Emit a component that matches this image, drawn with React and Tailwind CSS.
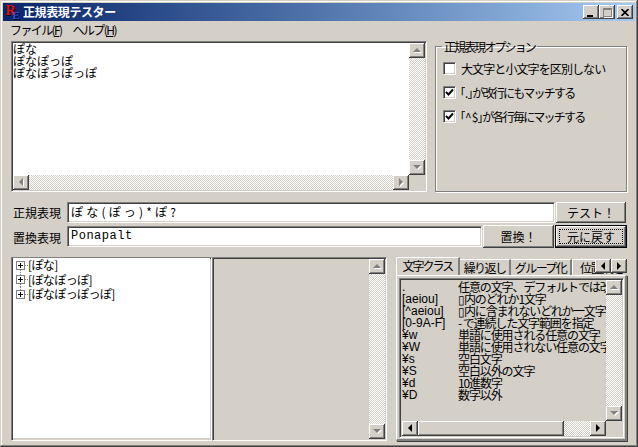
const jp = "font-['Noto_Sans_CJK_JP','Liberation_Sans',sans-serif]";
const sunken = "border border-t-[#808080] border-l-[#808080] border-b-white border-r-white shadow-[inset_1px_1px_0_#404040,inset_-1px_-1px_0_#d4d0c8] p-px";
const raised = "shadow-[inset_-1px_-1px_0_#404040,inset_1px_1px_0_#fff,inset_-2px_-2px_0_#808080,inset_2px_2px_0_#d4d0c8] bg-[#d4d0c8]";
const dither = "bg-[repeating-conic-gradient(#ffffff_0_25%,#d4d0c8_0_50%)] bg-size-[2px_2px]";

function Arrow({ dir, off }) {
  const pts = {
    up: "0,4 8,4 4,0", down: "0,0 8,0 4,4", left: "4,0 4,8 0,4", right: "0,0 0,8 4,4",
  }[dir];
  const vert = dir === "up" || dir === "down";
  const w = vert ? 8 : 4;
  const h = vert ? 4 : 8;
  return (
    <svg width={w + 1} height={h + 1} viewBox={`0 0 ${w + 1} ${h + 1}`} className="block">
      {off && <polygon points={pts} fill="#ffffff" transform="translate(1 1)" />}
      <polygon points={pts} fill={off ? "#808080" : "#000000"} />
    </svg>
  );
}

function SB({ dir, off, className = "" }) {
  return (
    <div className={`${raised} shrink-0 flex items-center justify-center w-4 h-[15px] ${className}`}>
      <Arrow dir={dir} off={off} />
    </div>
  );
}

function VScroll({ off = true }) {
  return (
    <div className="w-4 shrink-0 flex flex-col">
      <SB dir="up" off={off} />
      <div className={`flex-1 ${dither}`} />
      <SB dir="down" off={off} />
    </div>
  );
}

function Check({ on, tight, children }) {
  return (
    <div className="flex items-center h-[13px] gap-[5px]">
      <div className={`${sunken} w-[13px] h-[13px] bg-white shrink-0 !p-0 flex items-center justify-center`}>
        {on && (
          <svg width="9" height="9" viewBox="0 0 9 9" className="block">
            <path d="M1 4 L3.5 6.5 L8 1.5" stroke="#000" strokeWidth="2" fill="none" />
          </svg>
        )}
      </div>
      <span className={`text-[12px] leading-[13px] whitespace-nowrap text-black ${tight ? "tracking-[-1.8px]" : "tracking-[-0.9px]"}`}>{children}</span>
    </div>
  );
}

function Quote({ children }) {
  return (
    <span className="tracking-[0px]">
      <span className="inline-block w-[4px] overflow-hidden align-bottom"><span className="inline-block ml-[-7px]">「</span></span>
      {children}
      <span className="inline-block w-[4px] overflow-hidden align-bottom"><span className="inline-block ml-[-1px]">」</span></span>
    </span>
  );
}

function PushButton({ className = "", children }) {
  return (
    <div className={`${raised} flex items-center justify-center text-[12px] text-black ${className}`}>{children}</div>
  );
}

function TreeRow({ first, last, children }) {
  return (
    <div className="flex items-center h-[14.5px] whitespace-nowrap">
      <svg width="12" height="15" viewBox="0 0 12 15" className="block ml-[3px] shrink-0">
        {!first && <line x1="4.5" y1="0" x2="4.5" y2="3" stroke="#808080" strokeDasharray="1 1" />}
        {!last && <line x1="4.5" y1="12" x2="4.5" y2="15" stroke="#808080" strokeDasharray="1 1" />}
        <line x1="9" y1="7.5" x2="12" y2="7.5" stroke="#808080" strokeDasharray="1 1" />
        <rect x="0.5" y="3.5" width="8" height="8" fill="#fff" stroke="#808080" />
        <path d="M2 7.5H7M4.5 5V10" stroke="#000" />
      </svg>
      <span className="text-[12px] leading-[14px] tracking-[-0.6px] text-black">{children}</span>
    </div>
  );
}

const rows = [
  [".", "任意の文字、デフォルトでは改行以外"],
  ["[aeiou]", "▯内のどれか1文字"],
  ["[^aeiou]", "▯内に含まれないどれか一文字"],
  ["[0-9A-F]", "- で連続した文字範囲を指定"],
  ["¥w", "単語に使用される任意の文字"],
  ["¥W", "単語に使用されない任意の文字"],
  ["¥s", "空白文字"],
  ["¥S", "空白以外の文字"],
  ["¥d", "10進数字"],
  ["¥D", "数字以外"],
];

export default function App() {
  return (
    <div className={`${jp} w-[638px] h-[447px] bg-[#d4d0c8] flex flex-col overflow-hidden p-[3px] shadow-[inset_-1px_-1px_0_#404040,inset_1px_1px_0_#d4d0c8,inset_-2px_-2px_0_#808080,inset_2px_2px_0_#fff]`}>
      {/* Title bar */}
      <div className="h-[18px] shrink-0 flex items-center bg-gradient-to-r from-[#0a246a] to-[#a6caf0] pl-[2px] pr-[2px]">
        <svg width="16" height="16" viewBox="0 0 16 16" className="block shrink-0">
          <text x="1.6" y="11.6" fontSize="14" fontWeight="bold" fontFamily="'Liberation Serif', serif" fill="#000000">R</text>
          <text x="0.6" y="10.6" fontSize="14" fontWeight="bold" fontFamily="'Liberation Serif', serif" fill="#e01010">R</text>
          <text x="8.5" y="16" fontSize="11" fontWeight="bold" fontFamily="'Liberation Serif', serif" fill="#000000">E</text>
          <text x="7.5" y="15" fontSize="11" fontWeight="bold" fontFamily="'Liberation Serif', serif" fill="#2a50e8">E</text>
        </svg>
        <span className="ml-[2px] mb-[1px] text-[12px] font-bold tracking-[-0.4px] text-white leading-none">正規表現テスター</span>
        <div className="ml-auto flex items-center">
          <div className={`${raised} w-4 h-[14px] flex items-end justify-center pb-[2px]`}>
            <div className="w-[6px] h-[2px] bg-black mr-[2px]" />
          </div>
          <div className={`${raised} w-4 h-[14px] flex items-center justify-center`}>
            <div className="relative w-[9px] h-[9px] border border-[#808080] border-t-2 shadow-[1px_1px_0_#fff]" />
          </div>
          <div className={`${raised} w-4 h-[14px] ml-[2px] flex items-center justify-center`}>
            <svg width="8" height="7" viewBox="0 0 8 7" className="block">
              <path d="M0.5 0L7.5 7M7.5 0L0.5 7" stroke="#000" strokeWidth="1.6" />
            </svg>
          </div>
        </div>
      </div>

      {/* Menu */}
      <div className="h-[20px] shrink-0 flex items-center pl-[7px] pb-[2px] gap-[11px] text-[12px] tracking-[-1.6px] text-black">
        <span>ファイル(<span className="underline">F</span>)</span>
        <span>ヘルプ(<span className="underline">H</span>)</span>
      </div>

      <div className="flex-1 min-h-0 flex flex-col pl-[8px] pr-[7px]">
        {/* Top row */}
        <div className="flex h-[151px] shrink-0">
          <div className={`${sunken} w-[416px] flex flex-col`}>
            <div className="flex-1 min-h-0 flex">
              <div className="flex-1 bg-white pl-[0px] text-[12px] leading-[12px] tracking-[0px] text-black">
                <div>ぽな</div>
                <div>ぽなぽっぽ</div>
                <div>ぽなぽっぽっぽ</div>
              </div>
              <VScroll />
            </div>
            <div className="h-[15px] shrink-0 flex">
              <SB dir="left" off />
              <div className={`flex-1 ${dither}`} />
              <SB dir="right" off />
              <div className="w-4 shrink-0" />
            </div>
          </div>

          <fieldset className="ml-[8px] w-[192px] mt-[-1px] mb-0 h-[152px] border border-[#808080] shadow-[1px_1px_0_#fff,inset_1px_1px_0_#fff] pl-[6px] pr-0 flex flex-col box-border">
            <legend className="px-[2px] text-[12px] leading-[13px] tracking-[-1.9px] text-black">正規表現オプション</legend>
            <div className="pt-[9px] pl-[1px] flex flex-col gap-[11px]">
              <Check>大文字と小文字を区別しない</Check>
              <Check on tight><Quote>.</Quote>が改行にもマッチする</Check>
              <Check on tight><Quote>^$</Quote>が各行毎にマッチする</Check>
            </div>
          </fieldset>
        </div>

        {/* Regex row */}
        <div className="flex mt-[10px] h-[21px] shrink-0 items-start">
          <span className="w-[54px] ml-[2px] mt-[3px] text-[12px] leading-[15px] text-black shrink-0">正規表現</span>
          <div className={`${sunken} w-[488px] h-[21px] flex items-stretch`}>
            <div className="flex-1 bg-white pl-[2px] text-[12px] leading-[15px] tracking-[3.2px] text-black overflow-hidden whitespace-nowrap">ぽな(ぽっ)*ぽ?</div>
          </div>
          <PushButton className="w-[70px] h-[21px] ml-[1px] tracking-[0px]">テスト！</PushButton>
        </div>

        {/* Replace row */}
        <div className="flex mt-[2px] h-[23px] shrink-0 items-start">
          <span className="w-[54px] ml-[2px] mt-[5px] text-[12px] leading-[15px] text-black shrink-0">置換表現</span>
          <div className={`${sunken} w-[415px] h-[21px] mt-[1px] flex items-stretch`}>
            <div className="flex-1 bg-white pl-[2px] text-[12px] leading-[16px] tracking-[0.5px] font-['Liberation_Mono',monospace] text-black overflow-hidden whitespace-nowrap">Ponapalt</div>
          </div>
          <PushButton className="w-[71px] h-[23px] ml-[1px]">置換！</PushButton>
          <div className="w-[72px] h-[23px] ml-[1px] border border-black">
            <PushButton className="w-full h-full p-[3px]">
              <div className="w-full h-full border border-dotted border-black flex items-center justify-center leading-none">元に戻す</div>
            </PushButton>
          </div>
        </div>

        {/* Bottom row */}
        <div className="flex mt-[9px] h-[184px] shrink-0">
          <div className={`${sunken} w-[201px]`}>
            <div className="h-full bg-white mt-[-1px]">
              <TreeRow first>[ぽな]</TreeRow>
              <TreeRow>[ぽなぽっぽ]</TreeRow>
              <TreeRow last>[ぽなぽっぽっぽ]</TreeRow>
            </div>
          </div>
          <div className={`${sunken} w-[175px] flex justify-end`}>
            <VScroll />
          </div>

          {/* Tabs */}
          <div className="ml-[9px] w-[231px] flex flex-col relative">
            <div className="h-[18px] shrink-0 flex items-end overflow-hidden text-[12px] tracking-[-1.6px] text-black leading-none">
              <div className="h-[18px] w-[64px] pb-[2px] shrink-0 bg-[#d4d0c8] border-l border-t border-white rounded-tl-[2px] border-r-2 border-r-[#808080] flex items-center justify-center tracking-[-2px] relative z-10">文字クラス</div>
              <div className="h-[16px] w-[51px] shrink-0 border-t border-white border-r-2 border-r-[#808080] flex items-center justify-center">繰り返し</div>
              <div className="h-[16px] w-[61px] shrink-0 border-t border-white border-r-2 border-r-[#808080] flex items-center justify-center">グループ化</div>
              <div className="h-[16px] flex-1 border-t border-l border-white pl-[7px] flex items-center">位置指定</div>
            </div>
            <div className="absolute right-[0px] top-[2px] flex">
              <SB dir="left" className="!h-[14px]" />
              <SB dir="right" className="!h-[14px]" />
            </div>
            <div className="flex-1 min-h-0 border-l border-t border-white border-r-2 border-r-[#808080] border-b-2 border-b-[#808080] pl-[2px] pt-[2px] pr-[1px] pb-[1px] shadow-[1px_1px_0_#404040]">
              <div className={`${sunken} h-full flex flex-col`}>
                <div className="flex-1 min-h-0 flex">
                  <div className="flex-1 min-w-0 overflow-hidden pt-[1px] text-[12px] leading-[12px] text-black">
                    {rows.map(([k, v]) => (
                      <div key={k} className="flex whitespace-nowrap h-[12px]">
                        <span className="w-[57px] shrink-0 pl-[1px] font-['Liberation_Sans',sans-serif]">{k}</span>
                        <span className="tracking-[-1.1px]">{v}</span>
                      </div>
                    ))}
                  </div>
                  <VScroll />
                </div>
                <div className="h-[15px] shrink-0 flex pl-[1px]">
                  <SB dir="left" />
                  <div className={`${raised} w-[146px] shrink-0`} />
                  <div className={`flex-1 ${dither}`} />
                  <SB dir="right" />
                  <div className="w-4 shrink-0" />
                </div>
              </div>
            </div>
          </div>
        </div>
      </div>
    </div>
  );
}
